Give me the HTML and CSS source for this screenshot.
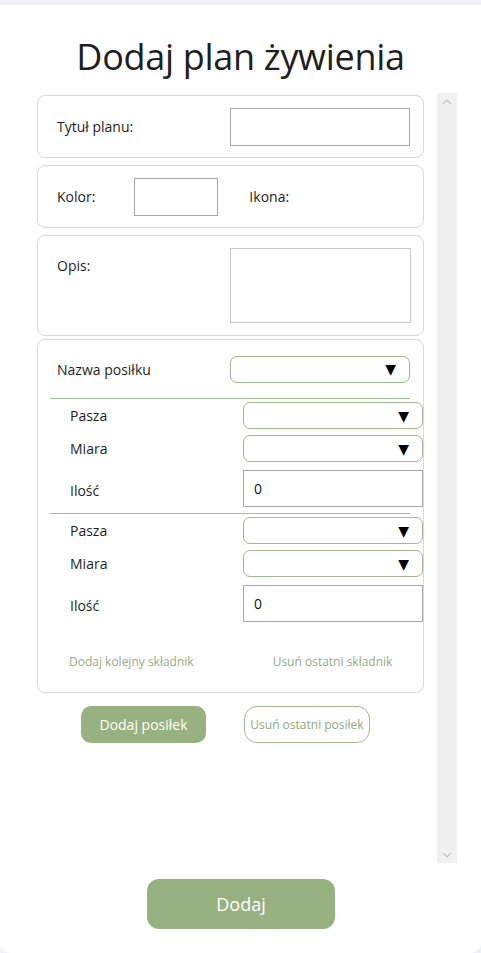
FILE: index.html
```html
<!DOCTYPE html>
<html lang="pl">
<head>
<meta charset="utf-8">
<title>Dodaj plan żywienia</title>
<link rel="stylesheet" href="styles.css">
</head>
<body>
<div class="panel">
  <h1 class="title">Dodaj plan żywienia</h1>
  <div class="scroll-wrap">
    <div class="content">
      <div class="card card-row">
        <span class="label">Tytuł planu:</span>
        <div class="input input-title"></div>
      </div>
      <div class="card card-row card-color">
        <span class="label">Kolor:</span>
        <div class="input input-color"></div>
        <span class="label label-icon">Ikona:</span>
      </div>
      <div class="card card-desc">
        <span class="label">Opis:</span>
        <div class="textarea"></div>
      </div>
      <div class="card card-meal">
        <div class="meal-head">
          <span class="label">Nazwa posiłku</span>
          <div class="select select-meal"><span class="arrow">▼</span></div>
        </div>
        <div class="ingredient">
          <div class="ing-row"><span class="label">Pasza</span><div class="select"><span class="arrow">▼</span></div></div>
          <div class="ing-row"><span class="label">Miara</span><div class="select"><span class="arrow">▼</span></div></div>
          <div class="ing-row ing-qty"><span class="label">Ilość</span><div class="input input-qty">0</div></div>
        </div>
        <div class="ingredient">
          <div class="ing-row"><span class="label">Pasza</span><div class="select"><span class="arrow">▼</span></div></div>
          <div class="ing-row"><span class="label">Miara</span><div class="select"><span class="arrow">▼</span></div></div>
          <div class="ing-row ing-qty"><span class="label">Ilość</span><div class="input input-qty">0</div></div>
        </div>
        <div class="links">
          <span class="link link-add">Dodaj kolejny składnik</span>
          <span class="link link-remove">Usuń ostatni składnik</span>
        </div>
      </div>
      <div class="meal-buttons">
        <button class="btn btn-meal">Dodaj posiłek</button>
        <button class="btn btn-outline">Usuń ostatni posiłek</button>
      </div>
    </div>
    <div class="scrollbar">
      <div class="sb-btn"><svg width="10" height="6" viewBox="0 0 10 6"><path d="M1 5 L5 1 L9 5" fill="none" stroke="#c4c4c4" stroke-width="1.2"/></svg></div>
      <div class="sb-track"></div>
      <div class="sb-btn"><svg width="10" height="6" viewBox="0 0 10 6"><path d="M1 1 L5 5 L9 1" fill="none" stroke="#c4c4c4" stroke-width="1.2"/></svg></div>
    </div>
  </div>
  <div class="footer">
    <button class="btn btn-submit">Dodaj</button>
  </div>
</div>
</body>
</html>
```
FILE: styles.css
```css
* { box-sizing: border-box; }
html, body { margin: 0; padding: 0; }
body {
  background: #eef1f5;
  font-family: "Open Sans", "Noto Sans", sans-serif;
  color: #1e1e1e;
  height: 953px;
  overflow: hidden;
}
.panel {
  margin-top: 5px;
  height: 948px;
  background: #ffffff;
  border-radius: 0 0 10px 10px;
  display: flex;
  flex-direction: column;
}
.title {
  margin: 0;
  padding-top: 28px;
  height: 88px;
  text-align: center;
  font-weight: 400;
  font-size: 36px;
  line-height: 48px;
  letter-spacing: -0.3px;
  color: #1e1e1e;
}
.scroll-wrap {
  display: flex;
  height: 770px;
  padding-left: 37px;
}
.content {
  width: 387px;
  padding-top: 2px;
  display: flex;
  flex-direction: column;
  gap: 7px;
}
.scrollbar {
  margin-left: 13px;
  width: 20px;
  height: 770px;
  background: #f0f0f0;
  display: flex;
  flex-direction: column;
}
.sb-btn {
  height: 17px;
  display: flex;
  align-items: center;
  justify-content: center;
}
.sb-track { flex: 1; }
.card {
  border: 1px solid #d5ddcc;
  border-radius: 8px;
  background: #fff;
}
.label {
  font-size: 14px;
  color: #1e1e1e;
}
.card-row {
  height: 63px;
  flex: none;
  display: flex;
  align-items: center;
  padding-left: 19px;
}
.input {
  border: 1px solid #a9a9a9;
  background: #fff;
  font-size: 14px;
  display: flex;
  align-items: center;
}
.input-title {
  margin-left: auto;
  margin-right: 13px;
  width: 180px;
  height: 38px;
}
.input-color {
  margin-left: 39px;
  width: 84px;
  height: 38px;
}
.label-icon { margin-left: 31px; }
.card-desc {
  height: 101px;
  flex: none;
  display: flex;
  justify-content: space-between;
  padding: 20px 12px 0 19px;
}
.textarea {
  width: 181px;
  height: 75px;
  border: 1px solid #c6c6c6;
  margin-top: -8px;
}
.card-meal {
  margin-top: -4px;
  height: 354px;
  flex: none;
  padding: 15px 0 0 0;
}
.meal-head {
  display: flex;
  align-items: center;
  justify-content: space-between;
  padding: 0 13px 0 19px;
  height: 28px;
}
.select {
  width: 180px;
  height: 27px;
  border: 1px solid #9fb88f;
  border-radius: 7px;
  background: #fff;
  display: flex;
  align-items: center;
  justify-content: flex-end;
  padding-right: 13px;
}
.arrow {
  font-family: "DejaVu Sans", sans-serif;
  font-size: 14px;
  color: #000;
  line-height: 1;
}
.ingredient {
  display: flex;
  flex-direction: column;
  margin: 15px 13px 0 12px;
  border-top: 1px solid #a3bb93;
  padding-top: 3px;
}
.ingredient + .ingredient { margin-top: 6px; }
.ing-row {
  display: flex;
  align-items: center;
  justify-content: space-between;
  margin-right: -13px;
  padding-left: 20px;
  height: 27px;
  margin-bottom: 6px;
}
.ing-qty {
  height: 37px;
  margin-top: 2px;
  margin-bottom: 0;
}
.ing-qty .label { padding-top: 4px; }
.input-qty {
  width: 180px;
  height: 37px;
  padding-left: 10px;
  color: #111;
}
.links {
  display: flex;
  padding: 31px 0 0 31px;
}
.link {
  font-size: 12px;
  color: #94ac86;
}
.link-remove { margin-left: 79px; }
.meal-buttons {
  display: flex;
  padding-left: 44px;
  gap: 38px;
  margin-top: 6px;
}
.btn {
  font-family: "Open Sans", "Noto Sans", sans-serif;
  cursor: pointer;
}
.btn-meal {
  width: 125px;
  height: 37px;
  border: none;
  border-radius: 10px;
  background: #97b280;
  color: #fff;
  font-size: 14px;
}
.btn-outline {
  width: 126px;
  height: 37px;
  border: 1px solid #a3ba93;
  border-radius: 13px;
  background: #fff;
  color: #8fa97f;
  font-size: 12px;
  padding: 0;
}
.footer {
  display: flex;
  justify-content: center;
  padding-top: 16px;
  padding-left: 1px;
}
.btn-submit {
  width: 188px;
  height: 50px;
  border: none;
  border-radius: 12px;
  background: #97b280;
  color: #fff;
  font-size: 18px;
}
```
